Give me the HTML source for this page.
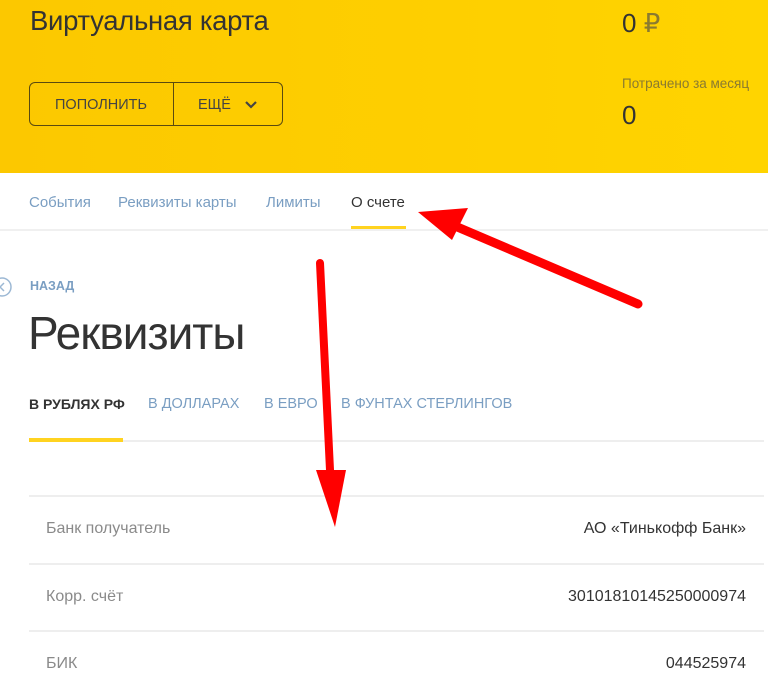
<!DOCTYPE html>
<html><head><meta charset="utf-8"><style>
*{margin:0;padding:0;box-sizing:border-box}
body{width:768px;height:681px;overflow:hidden;background:#fff;font-family:"Liberation Sans",sans-serif;position:relative}
.a{position:absolute;white-space:nowrap}
.top{position:absolute;left:0;top:0;width:768px;height:173px;background:linear-gradient(90deg,#fcc800,#ffd400)}
.btn{position:absolute;left:29px;top:82px;width:254px;height:44px;border:1px solid #5a4a10;border-radius:6px}
.btn .d{position:absolute;left:143px;top:0;width:1px;height:42px;background:#5a4a10}
.line{position:absolute;height:2px;background:#eee}
.lab{color:#8a8a8a;font-size:16px}
.val{color:#333;font-size:16px;right:22px}
</style></head><body>
<div class="top"></div>
<div class="a" style="left:30px;top:5px;font-size:27.5px;color:#333;letter-spacing:-0.3px">Виртуальная карта</div>
<div class="a" style="left:622px;top:8px;font-size:26px;color:#333">0 <span style="color:#8a7a30">₽</span></div>
<div class="a" style="left:622px;top:76px;font-size:13.5px;color:#8a7a30">Потрачено за месяц</div>
<div class="a" style="left:622px;top:100px;font-size:26px;color:#333">0</div>
<div class="btn"><div class="d"></div>
<div class="a" style="left:25px;top:14px;font-size:14.5px;color:#444">ПОПОЛНИТЬ</div>
<div class="a" style="left:168px;top:14px;font-size:14.5px;color:#444">ЕЩЁ</div>
<svg class="a" style="left:214px;top:17px" width="14" height="10"><path d="M2 2l5 5 5-5" stroke="#444" stroke-width="2.2" fill="none"/></svg>
</div>
<div class="a" style="left:29px;top:194px;font-size:15px;color:#7a9ec2">События</div>
<div class="a" style="left:118px;top:194px;font-size:15px;color:#7a9ec2">Реквизиты карты</div>
<div class="a" style="left:266px;top:194px;font-size:15px;color:#7a9ec2">Лимиты</div>
<div class="a" style="left:351px;top:194px;font-size:15px;color:#333">О счете</div>
<div class="line" style="left:0;top:229px;width:768px;background:#f0f0f0"></div>
<div class="a" style="left:351px;top:226px;width:55px;height:3px;background:#ffd320"></div>
<svg class="a" style="left:-8px;top:276px" width="24" height="24"><circle cx="10" cy="11" r="9" stroke="#9cb8d4" stroke-width="1.5" fill="none"/><path d="M12 7l-4 4 4 4" stroke="#9cb8d4" stroke-width="1.5" fill="none"/></svg>
<div class="a" style="left:30px;top:279px;font-size:12.5px;font-weight:bold;color:#7a9ec2">НАЗАД</div>
<div class="a" style="left:28px;top:306px;font-size:46px;font-weight:300;color:#333;letter-spacing:-1px">Реквизиты</div>
<div class="a" style="left:29px;top:396px;font-size:14px;font-weight:bold;color:#333">В РУБЛЯХ РФ</div>
<div class="a" style="left:148px;top:396px;font-size:14.5px;color:#7a9ec2">В ДОЛЛАРАХ</div>
<div class="a" style="left:264px;top:396px;font-size:14.5px;color:#7a9ec2">В ЕВРО</div>
<div class="a" style="left:341px;top:396px;font-size:14.5px;color:#7a9ec2">В ФУНТАХ СТЕРЛИНГОВ</div>
<div class="line" style="left:29px;top:440px;width:735px"></div>
<div class="a" style="left:29px;top:438px;width:94px;height:4px;background:#ffd320"></div>
<div class="line" style="left:29px;top:495px;width:735px"></div>
<div class="line" style="left:29px;top:563px;width:735px"></div>
<div class="line" style="left:29px;top:630px;width:735px"></div>
<div class="a lab" style="left:46px;top:520px">Банк получатель</div>
<div class="a val" style="top:520px">АО «Тинькофф Банк»</div>
<div class="a lab" style="left:46px;top:588px">Корр. счёт</div>
<div class="a val" style="top:588px">30101810145250000974</div>
<div class="a lab" style="left:46px;top:655px">БИК</div>
<div class="a val" style="top:655px">044525974</div>
<svg class="a" style="left:0;top:0" width="768" height="681">
<path d="M638 304L455 226" stroke="#f00" stroke-width="9" stroke-linecap="round"/>
<path d="M418 212L468 208L452 240Z" fill="#f00"/>
<path d="M320 263L330 470" stroke="#f00" stroke-width="8" stroke-linecap="round"/>
<path d="M335 527L316 470L346 470Z" fill="#f00"/>
</svg>
</body></html>
